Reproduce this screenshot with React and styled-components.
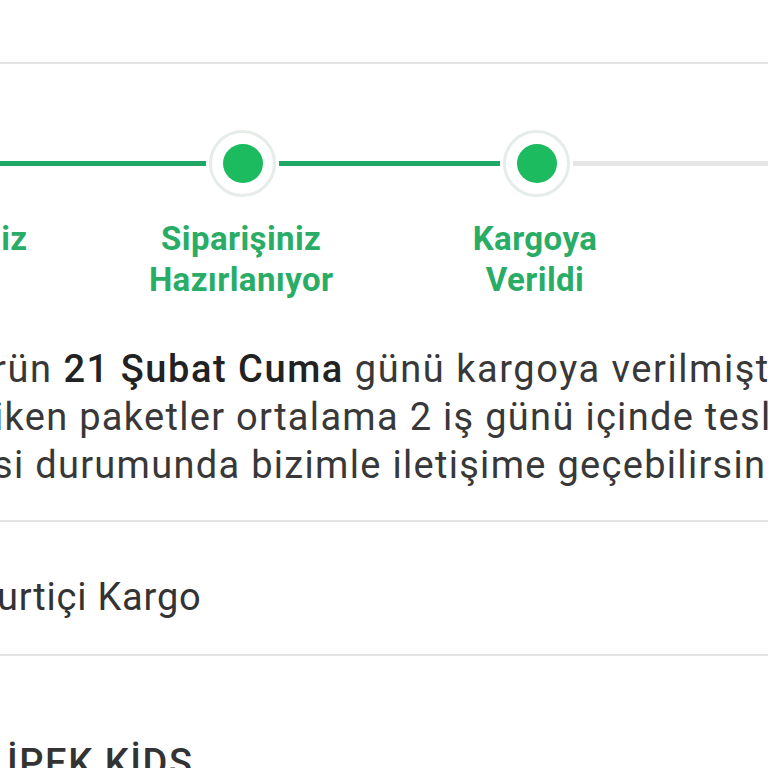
import React from "react";
import styled, { createGlobalStyle } from "styled-components";

const Global = createGlobalStyle`
  html, body { margin: 0; padding: 0; background: #ffffff; }
  body { font-family: Roboto, "Noto Sans", "Liberation Sans", sans-serif; }
`;

const GREEN = "#1dbb5f";
const LINE_GREEN = "#1fa865";
const LABEL_GREEN = "#29ad66";
const GRAY_LINE = "#e6e6e6";

const Page = styled.div`
  width: 768px;
  height: 768px;
  overflow: hidden;
  background: #fff;
  display: flex;
  flex-direction: column;
`;

const TopSpace = styled.div`
  height: 62px;
  flex-shrink: 0;
`;

const Divider = styled.div`
  height: 2px;
  flex-shrink: 0;
  background: #e4e4e4;
`;

const Stepper = styled.div`
  display: grid;
  grid-template-columns: repeat(4, 293.8px);
  margin-left: -198px;
  padding-top: 65.5px;
  flex-shrink: 0;
`;

const Step = styled.div`
  display: flex;
  flex-direction: column;
  align-items: center;
`;

const Track = styled.div`
  display: flex;
  align-items: center;
  width: 100%;
`;

const Line = styled.div`
  flex: 1;
  height: 5px;
  background: ${(p) =>
    p.$state === "done" ? LINE_GREEN : p.$state === "todo" ? GRAY_LINE : "transparent"};
`;

const Halo = styled.div`
  width: 67px;
  height: 67px;
  box-sizing: border-box;
  margin: 0 3px;
  border-radius: 50%;
  border: 3px solid #e6ece8;
  background: #fff;
  display: flex;
  align-items: center;
  justify-content: center;
  flex-shrink: 0;
`;

const Dot = styled.div`
  width: 40px;
  height: 39px;
  border-radius: 50%;
  background: ${(p) => (p.$active ? GREEN : "#d9d9d9")};
`;

const Label = styled.div`
  margin-top: 21.7px;
  margin-right: 3px;
  font-size: 33px;
  line-height: 41px;
  font-weight: 700;
  letter-spacing: 0.4px;
  text-align: center;
  color: ${(p) => (p.$active ? LABEL_GREEN : "#9a9a9a")};
`;

const Message = styled.div`
  padding-top: 45px;
  padding-bottom: 30.5px;
  margin-left: -6px;
  font-size: 38px;
  line-height: 48px;
  color: #383838;
  white-space: nowrap;
  flex-shrink: 0;
`;

const MsgLine = styled.div`
  margin-left: ${(p) => p.$shift || 0}px;
  letter-spacing: ${(p) => p.$spacing || 1.3}px;
`;

const Strong = styled.span`
  font-weight: 500;
  color: #222;
`;

const InfoRow = styled.div`
  padding: ${(p) => p.$pad};
  margin-left: ${(p) => p.$shift}px;
  font-size: 38px;
  line-height: 47.5px;
  letter-spacing: ${(p) => p.$spacing}px;
  font-weight: ${(p) => p.$weight || 400};
  color: #333;
  white-space: nowrap;
  flex-shrink: 0;
`;

const steps = [
  { label: ["Siparişiniz", "Alındı"], left: "none", right: "done", active: true },
  { label: ["Siparişiniz", "Hazırlanıyor"], left: "done", right: "done", active: true },
  { label: ["Kargoya", "Verildi"], left: "done", right: "todo", active: true },
  { label: ["Teslim", "Edildi"], left: "todo", right: "none", active: false },
];

export default function App() {
  return (
    <Page>
      <Global />
      <TopSpace />
      <Divider />
      <Stepper>
        {steps.map((s, i) => (
          <Step key={i}>
            <Track>
              <Line $state={s.left} />
              <Halo>
                <Dot $active={s.active} />
              </Halo>
              <Line $state={s.right} />
            </Track>
            <Label $active={s.active}>
              {s.label[0]}
              <br />
              {s.label[1]}
            </Label>
          </Step>
        ))}
      </Stepper>
      <Message>
        <MsgLine $shift={-1} $spacing={1.55}>
          rün <Strong>21 Şubat Cuma</Strong> günü kargoya verilmiştir.
        </MsgLine>
        <MsgLine>iken paketler ortalama 2 iş günü içinde teslim edilir.</MsgLine>
        <MsgLine $shift={-1}>si durumunda bizimle iletişime geçebilirsiniz.</MsgLine>
      </Message>
      <Divider />
      <InfoRow $pad="52px 0 32.6px" $shift={-26} $spacing={0.8}>
        Yurtiçi Kargo
      </InfoRow>
      <Divider />
      <InfoRow $pad="84px 0 0" $shift={7} $spacing={1.55} $weight={500}>
        İPEK KİDS
      </InfoRow>
    </Page>
  );
}
